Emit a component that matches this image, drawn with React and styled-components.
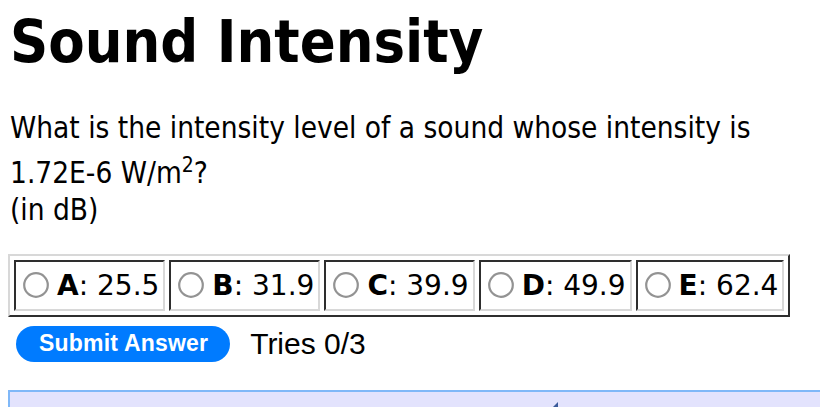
import React, { useState } from 'react'
import styled, { createGlobalStyle } from 'styled-components'

const GlobalStyle = createGlobalStyle`
  html, body {
    margin: 0;
    padding: 0;
    background: #ffffff;
  }
  body {
    margin: 8px;
    font-family: "DejaVu Sans Condensed", "DejaVu Sans", sans-serif;
    color: #000000;
  }
`

const Title = styled.h1`
  font-family: "DejaVu Sans Condensed", "DejaVu Sans", sans-serif;
  font-weight: 700;
  font-size: 59px;
  line-height: 66px;
  margin: 1px 0 35px 2px;
`

const Question = styled.p`
  font-family: "DejaVu Sans Condensed", "DejaVu Sans", sans-serif;
  font-size: 29.5px;
  line-height: 37px;
  margin: 0 0 25px 2px;

  sup {
    font-size: 21px;
  }
`

const ChoiceTable = styled.table`
  border: 2px solid;
  border-color: #d8d8d8 #2e2e2e #2e2e2e #d8d8d8;
  border-spacing: 4px;
  margin: 0 0 9px 0;
`

const ChoiceCell = styled.td`
  border: 2px solid;
  border-color: #2e2e2e #d8d8d8 #d8d8d8 #2e2e2e;
  padding: 0 4px 0 7px;
  height: 47px;
  white-space: nowrap;
`

const ChoiceLabel = styled.label`
  display: flex;
  align-items: center;
  font-family: "DejaVu Sans", sans-serif;
  font-size: 28px;
  cursor: pointer;
`

const RadioIcon = styled.svg`
  display: block;
  flex: 0 0 26px;
  width: 26px;
  height: 26px;
  margin: 0 8px 0 0;
`

const Letter = styled.b`
  font-weight: 700;
`

const ActionRow = styled.div`
  display: flex;
  align-items: center;
  gap: 20px;
  margin: 0 0 28px 8px;
`

const SubmitButton = styled.button`
  background: #007bff;
  color: #ffffff;
  border: none;
  border-radius: 18px;
  height: 36px;
  padding: 0 22px 0 23px;
  font-family: "Liberation Sans", Arial, sans-serif;
  font-weight: 700;
  font-size: 23px;
  letter-spacing: 0.2px;
  cursor: pointer;
`

const Tries = styled.span`
  font-family: "Liberation Sans", Arial, sans-serif;
  font-size: 30px;
  line-height: 36px;
`

const HintPanel = styled.div`
  background: #e3e3fd;
  border: 2px solid #80b8f8;
  height: 60px;
  margin-right: -2px;
  position: relative;
`

const Caret = styled.span`
  position: absolute;
  left: 543px;
  top: 10px;
  width: 0;
  height: 0;
  border-left: 5px solid transparent;
  border-bottom: 5px solid #3a5a9a;
`

function Radio({ checked }) {
  return (
    <RadioIcon viewBox="0 0 26 26" width="26" height="26">
      <circle cx="13" cy="13" r="11.8" fill="#ffffff" stroke={checked ? '#007bff' : '#939393'} strokeWidth="2.2" />
      {checked && <circle cx="13" cy="13" r="6" fill="#007bff" />}
    </RadioIcon>
  )
}

const choices = [
  { key: 'A', value: '25.5' },
  { key: 'B', value: '31.9' },
  { key: 'C', value: '39.9' },
  { key: 'D', value: '49.9' },
  { key: 'E', value: '62.4' },
]

export default function App() {
  const [selected, setSelected] = useState(null)

  return (
    <>
      <GlobalStyle />
      <Title>Sound Intensity</Title>
      <Question>
        What is the intensity level of a sound whose intensity is
        <br />
        1.72E-6 W/m<sup>2</sup>?
        <br />
        (in dB)
      </Question>
      <ChoiceTable>
        <tbody>
          <tr>
            {choices.map(c => (
              <ChoiceCell key={c.key}>
                <ChoiceLabel onClick={() => setSelected(c.key)}>
                  <Radio checked={selected === c.key} />
                  <Letter>{c.key}</Letter>: {c.value}
                </ChoiceLabel>
              </ChoiceCell>
            ))}
          </tr>
        </tbody>
      </ChoiceTable>
      <ActionRow>
        <SubmitButton>Submit Answer</SubmitButton>
        <Tries>Tries 0/3</Tries>
      </ActionRow>
      <HintPanel>
        <Caret />
      </HintPanel>
    </>
  )
}
